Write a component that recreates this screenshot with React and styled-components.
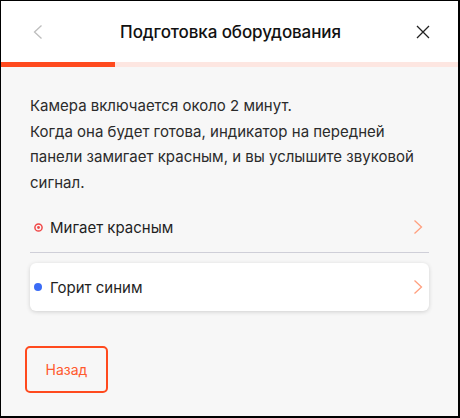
import React from "react";
import styled, { createGlobalStyle } from "styled-components";

const GlobalStyle = createGlobalStyle`
  html, body { margin: 0; padding: 0; background: #fff; }
  body { font-family: Inter, "Noto Sans", sans-serif; }
`;

const Frame = styled.div`
  box-sizing: border-box;
  width: 460px;
  height: 418px;
  border: solid #000;
  border-width: 1px 2px 2px 1px;
  background: #f7f7f7;
  display: flex;
  flex-direction: column;
  overflow: hidden;
`;

const Header = styled.header`
  height: 61px;
  background: #fff;
  display: flex;
  align-items: center;
  justify-content: space-between;
  padding: 0 26px 0 28px;
`;

const Title = styled.h1`
  margin: 0;
  font-size: 17px;
  font-weight: 500;
  color: #111;
  letter-spacing: -0.1px;
`;

const IconButton = styled.button`
  width: 18px;
  height: 18px;
  padding: 0;
  border: 0;
  background: none;
  display: flex;
  align-items: center;
  justify-content: center;
  color: ${(p) => p.$color};
`;

const Progress = styled.div`
  height: 5px;
  background: #fde6e1;
  display: flex;
`;

const ProgressFill = styled.div`
  background: #ff4a1e;
  height: 100%;
`;

const Body = styled.main`
  flex: 1;
  padding: 26px 29px 0 29px;
  display: flex;
  flex-direction: column;
`;

const Text = styled.p`
  margin: 0;
  font-size: 15px;
  line-height: 25.5px;
  color: #2b2b2b;
`;

const Options = styled.div`
  margin-top: 7px;
  display: flex;
  flex-direction: column;
  gap: 10px;
`;

const Option = styled.div`
  height: ${(p) => (p.$active ? "48px" : "50px")};
  display: flex;
  align-items: center;
  padding: 0 0 0 1px;
  border-radius: 6px;
  background: ${(p) => (p.$active ? "#fff" : "transparent")};
  box-shadow: ${(p) => (p.$active ? "0 1px 4px rgba(0,0,0,0.16)" : "none")};
  border-bottom: ${(p) => (p.$active ? "none" : "1px solid #cfcfd8")};
  border-radius: ${(p) => (p.$active ? "6px" : "0")};
`;

const Dot = styled.span`
  width: 14px;
  display: flex;
  justify-content: center;
  margin-right: 5px;
`;

const Label = styled.span`
  flex: 1;
  font-size: 15px;
  color: #1f1f1f;
`;

const Chevron = styled.span`
  width: 18px;
  display: flex;
  justify-content: center;
  margin-right: 2px;
`;

const BackButton = styled.button`
  margin-top: 35px;
  margin-left: -5px;
  width: 83px;
  height: 47px;
  box-sizing: border-box;
  border: 2px solid #ff4a1e;
  border-radius: 5px;
  background: transparent;
  color: #ff5a2e;
  font-family: inherit;
  font-size: 14px;
  padding: 0;
`;

const ArrowRight = () => (
  <svg width="10" height="16" viewBox="0 0 10 16" fill="none">
    <path d="M1.5 1.5L8.5 8L1.5 14.5" stroke="#ffa07f" strokeWidth="1.3" />
  </svg>
);

export default function App() {
  return (
    <Frame>
      <GlobalStyle />
      <Header>
        <IconButton $color="#bdbdbd">
          <svg width="10" height="16" viewBox="0 0 10 16" fill="none">
            <path d="M8.5 1.5L1.5 8L8.5 14.5" stroke="currentColor" strokeWidth="1.3" />
          </svg>
        </IconButton>
        <Title>Подготовка оборудования</Title>
        <IconButton $color="#222">
          <svg width="14" height="14" viewBox="0 0 14 14" fill="none">
            <path d="M1 1L13 13M13 1L1 13" stroke="currentColor" strokeWidth="1.3" />
          </svg>
        </IconButton>
      </Header>
      <Progress>
        <ProgressFill style={{ width: "25%" }} />
      </Progress>
      <Body>
        <Text>
          Камера включается около 2 минут.
          <br />
          Когда она будет готова, индикатор на передней панели замигает
          красным, и вы услышите звуковой сигнал.
        </Text>
        <Options>
          <Option>
            <Dot>
              <svg width="9" height="9" viewBox="0 0 9 9">
                <circle cx="4.5" cy="4.5" r="3.6" fill="none" stroke="#f04848" strokeWidth="1.5" />
                <circle cx="4.5" cy="4.5" r="1.4" fill="#f04848" />
              </svg>
            </Dot>
            <Label>Мигает красным</Label>
            <Chevron>
              <ArrowRight />
            </Chevron>
          </Option>
          <Option $active>
            <Dot>
              <svg width="8" height="8" viewBox="0 0 8 8">
                <circle cx="4" cy="4" r="4" fill="#3b6cf6" />
              </svg>
            </Dot>
            <Label>Горит синим</Label>
            <Chevron>
              <ArrowRight />
            </Chevron>
          </Option>
        </Options>
        <div>
          <BackButton>Назад</BackButton>
        </div>
      </Body>
    </Frame>
  );
}
